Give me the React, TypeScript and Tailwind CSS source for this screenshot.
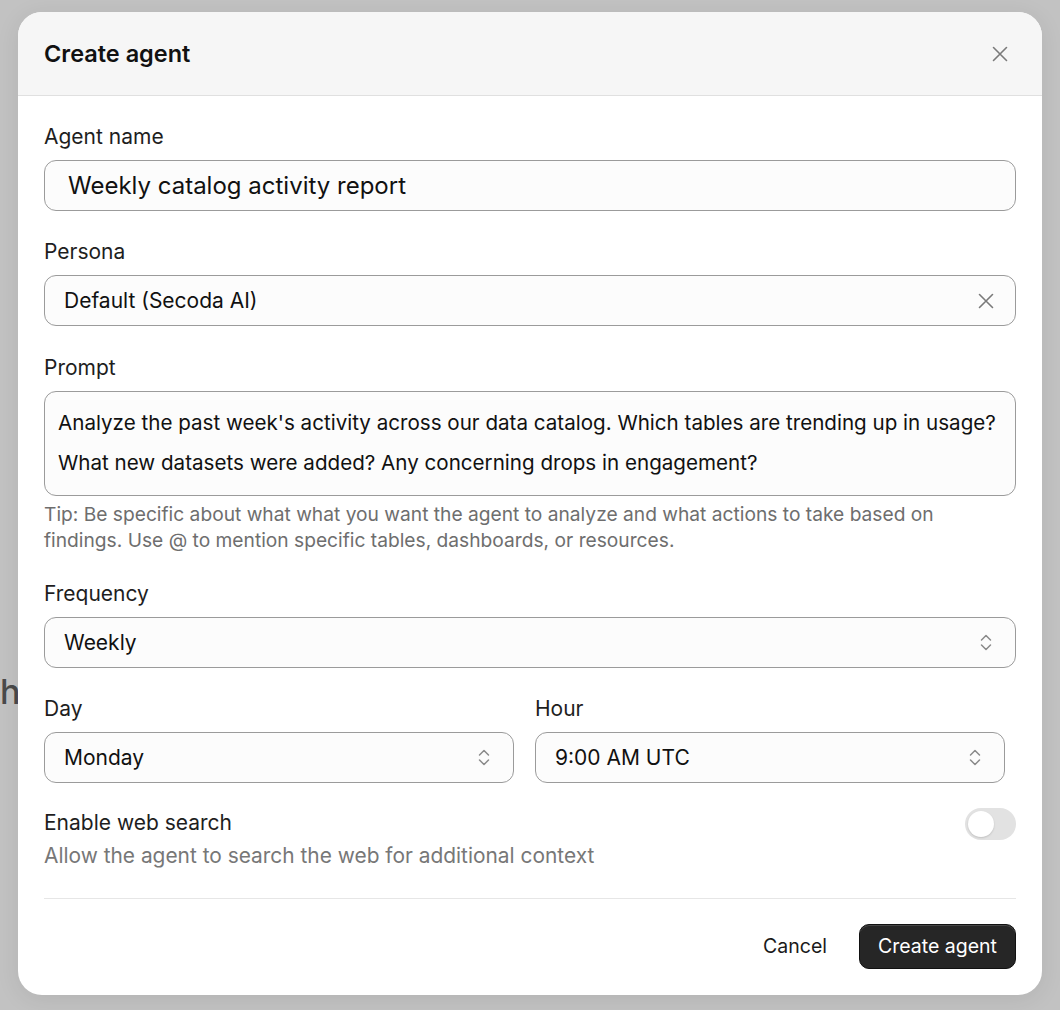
import { ReactNode } from "react";

const font = { fontFamily: "Inter, 'Noto Sans', sans-serif" };

const CloseIcon = ({ size = 16 }: { size?: number }) => (
  <svg width={size} height={size} viewBox="0 0 16 16" fill="none" stroke="currentColor" strokeWidth={1.6} strokeLinecap="round">
    <path d="M1.5 1.5l13 13M14.5 1.5l-13 13" />
  </svg>
);

const SelectorIcon = () => (
  <svg width="12" height="17" viewBox="0 0 12 17" fill="none" stroke="currentColor" strokeWidth={1.5} strokeLinecap="round" strokeLinejoin="round">
    <path d="M1.5 6l4.5-4.5L10.5 6" />
    <path d="M1.5 11l4.5 4.5 4.5-4.5" />
  </svg>
);

const Label = ({ children }: { children: ReactNode }) => (
  <div className="text-[21px] leading-[24px] text-[#1e1e1e] mb-[11px]">{children}</div>
);

const Select = ({ value }: { value: string }) => (
  <div className="h-[51px] flex items-center justify-between rounded-[12px] border border-[#9b9b9b] bg-[#fcfcfc] pl-[19px] pr-[23px]">
    <span className="text-[21px] text-[#111]">{value}</span>
    <span className="text-[#8a8a8a] flex">
      <SelectorIcon />
    </span>
  </div>
);

const App = () => {
  return (
    <div className="relative min-h-screen bg-[#c2c2c2] pt-[12px] pl-[18px] overflow-hidden" style={font}>
      {/* page content behind the overlay */}
      <div className="absolute left-0 top-[666px] text-[34px] font-medium text-[#4a4a4a]">h</div>

      <div className="relative w-[1024px] rounded-[24px] bg-white overflow-hidden shadow-[0_4px_24px_rgba(0,0,0,0.08)]">
        <div className="h-[84px] bg-[#f6f6f6] border-b border-[#e0e0e0] flex items-center justify-between pl-[26px] pr-[34px]">
          <h2 className="text-[23.5px] font-semibold text-[#111]">Create agent</h2>
          <span className="text-[#7a7a7a] flex">
            <CloseIcon size={16} />
          </span>
        </div>

        <div className="px-[26px] pt-[29px] pb-[26px]">
          <Label>Agent name</Label>
          <div className="h-[51px] flex items-center rounded-[12px] border border-[#9b9b9b] bg-[#fcfcfc] pl-[23px]">
            <span className="text-[24px] text-[#111]">Weekly catalog activity report</span>
          </div>

          <div className="mt-[29px]">
            <Label>Persona</Label>
            <div className="h-[51px] flex items-center justify-between rounded-[12px] border border-[#9b9b9b] bg-[#fcfcfc] pl-[19px] pr-[21px]">
              <span className="text-[21px] text-[#111]">Default (Secoda AI)</span>
              <span className="text-[#7a7a7a] flex">
                <CloseIcon size={16} />
              </span>
            </div>
          </div>

          <div className="mt-[30px]">
            <Label>Prompt</Label>
            <div className="rounded-[12px] border border-[#9b9b9b] bg-[#fcfcfc] pl-[13px] pt-[19px] pb-[20px] flex flex-col gap-[16px] text-[20.6px] leading-[24px] text-[#111]">
              <p>Analyze the past week's activity across our data catalog. Which tables are trending up in usage?</p>
              <p>What new datasets were added? Any concerning drops in engagement?</p>
            </div>
            <p className="mt-[5px] text-[19.2px] leading-[26px] text-[#6e6e6e] pr-[60px]">
              Tip: Be specific about what what you want the agent to analyze and what actions to take based on findings. Use @ to mention specific tables, dashboards, or resources.
            </p>
          </div>

          <div className="mt-[29px]">
            <Label>Frequency</Label>
            <Select value="Weekly" />
          </div>

          <div className="mt-[29px] grid grid-cols-[470px_470px] gap-x-[21px]">
            <div>
              <Label>Day</Label>
              <Select value="Monday" />
            </div>
            <div>
              <Label>Hour</Label>
              <Select value="9:00 AM UTC" />
            </div>
          </div>

          <div className="mt-[28px] flex items-start justify-between">
            <div>
              <div className="text-[21px] leading-[24px] text-[#1e1e1e]">Enable web search</div>
              <div className="mt-[9px] text-[20.9px] leading-[24px] text-[#777]">Allow the agent to search the web for additional context</div>
            </div>
            <div className="mt-[-3px] w-[51px] h-[32px] rounded-full bg-[#e2e2e2] p-[3px] flex items-center">
              <div className="w-[26px] h-[26px] rounded-full bg-white shadow-[0_1px_2px_rgba(0,0,0,0.15)]" />
            </div>
          </div>

          <div className="mt-[30px] border-t border-[#e6e6e6]" />

          <div className="mt-[25px] flex items-center justify-end gap-[14px]">
            <button className="h-[45px] px-[18px] text-[19.5px] text-[#1a1a1a]">Cancel</button>
            <button className="h-[45px] px-[18px] rounded-[10px] bg-[#262626] border border-[#111] text-[19.5px] text-white shadow-[inset_0_1px_0_rgba(255,255,255,0.15)]">
              Create agent
            </button>
          </div>
        </div>
      </div>
    </div>
  );
};

export default App;
